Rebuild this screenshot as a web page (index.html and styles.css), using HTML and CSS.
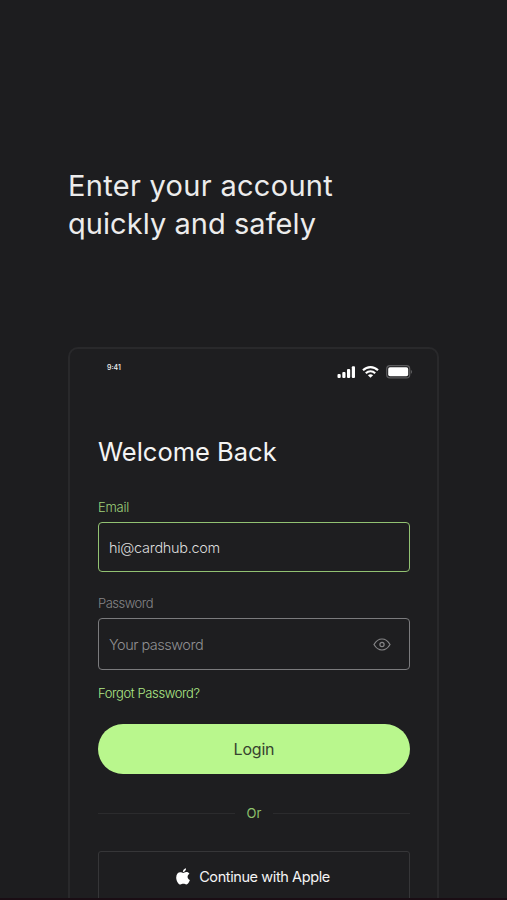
FILE: index.html
```html
<!DOCTYPE html>
<html lang="en">

<head>
    <meta charset="UTF-8">
    <meta name="viewport" content="width=device-width, initial-scale=1.0">
    <title>Cardhub Login</title>
    <link rel="stylesheet" href="styles.css">
</head>

<body>
    <h1 class="headline"><span class="line-one">Enter your account</span><br><span class="line-two">quickly and safely</span></h1>

    <main class="phone">
        <div class="status-bar">
            <span class="time">9:41</span>
            <div class="status-icons">
                <svg width="19" height="12" viewBox="0 0 19 12" fill="#fff">
                    <rect x="0.5" y="8" width="3.2" height="4" rx="1" />
                    <rect x="5.3" y="6" width="3.2" height="6" rx="1" />
                    <rect x="10" y="3" width="3.2" height="9" rx="1" />
                    <rect x="14.8" y="0.3" width="3.2" height="11.7" rx="1" />
                </svg>
                <svg class="wifi" width="17" height="12" viewBox="0 0 17 12" fill="none" stroke="#fff" stroke-width="2.1">
                    <path d="M1 4.3C5.2 0 11.8 0 16 4.3" />
                    <path d="M3.8 7.2c2.7-2.7 6.7-2.7 9.4 0" />
                    <path d="M8.5 11.8 5.9 9.2c1.5-1.4 3.7-1.4 5.2 0z" fill="#fff" stroke="none" />
                </svg>
                <svg width="27" height="14" viewBox="0 0 27 14">
                    <rect x="0.7" y="0.7" width="23" height="12.2" rx="3.2" fill="none" stroke="#5c5c5e" stroke-width="1.2" />
                    <rect x="2.2" y="2.3" width="20" height="9" rx="1.8" fill="#fff" />
                    <path d="M24.8 4.7c1.8.8 1.8 3.4 0 4.2z" fill="#5c5c5e" />
                </svg>
            </div>
        </div>

        <form class="login-form">
            <h2>Welcome Back</h2>

            <label class="active" for="email">Email</label>
            <div class="field active">
                <input type="text" id="email" value="hi@cardhub.com">
            </div>

            <label for="password">Password</label>
            <div class="field password">
                <input type="password" id="password" placeholder="Your password">
                <svg width="18" height="13" viewBox="0 0 18 13" fill="none" stroke="#858587" stroke-width="1.2">
                    <path d="M1 6.5C3 3 5.8 1 9 1s6 2 8 5.5C15 10 12.2 12 9 12S3 10 1 6.5z" />
                    <circle cx="9" cy="6.5" r="2.1" />
                </svg>
            </div>

            <a class="forgot" href="#">Forgot Password?</a>
            <button type="button" class="login">Login</button>

            <div class="divider"><span>Or</span></div>

            <button type="button" class="apple">
                <svg width="14" height="17" viewBox="0 0 14 17" fill="#fff">
                    <path d="M10 .2C10.2 2.2 8.6 4 6.9 3.9 6.7 2.1 8.3.4 10 .2z" />
                    <path d="M7.2 4.9c.8 0 1.7-.9 3.2-.8 1.3 0 2.4.7 3 1.6-2.7 1.6-2.2 5.2.5 6.3-.7 2-2 4.4-3.5 4.5-1.2 0-1.6-.7-3-.7s-1.9.7-3 .7C2.4 16.5.2 12.9.2 9.4c0-3.3 2-5.2 4-5.2 1.4 0 2.3.7 3 .7z" />
                </svg>
                <span>Continue with Apple</span>
            </button>
        </form>
    </main>
</body>

</html>
```
FILE: styles.css
```css
* {
    box-sizing: border-box;
}

body {
    margin: 0;
    height: 900px;
    overflow: hidden;
    background-color: #1d1d1f;
    border-bottom: 2px solid #1a0d14;
    color: #f4f4f4;
    font-family: Inter, "Liberation Sans", sans-serif;
}

.headline {
    margin: 0;
    height: 347px;
    padding: 167px 0 0 68px;
    font-size: 29px;
    font-weight: 400;
    line-height: 38px;
    white-space: nowrap;
    color: #ececec;
}

.line-one {
    letter-spacing: 0.3px;
}

.line-two {
    letter-spacing: 0.05px;
}

.phone {
    width: 371px;
    height: 580px;
    margin-left: 68px;
    border: 2px solid #29292b;
    border-radius: 10px;
    background-color: #1e1e20;
}

.status-bar {
    display: flex;
    justify-content: space-between;
    height: 88px;
    padding: 15px 24px 0 37px;
}

.time {
    font-size: 7px;
    font-weight: 500;
    line-height: 8px;
}

.status-icons {
    display: flex;
    align-items: center;
    height: 16px;
}

.wifi {
    margin: 0 7px 0 6px;
}

.login-form {
    display: flex;
    flex-direction: column;
    width: 312px;
    margin-left: 28px;
}

h2 {
    margin: 0;
    height: 61px;
    font-size: 25.5px;
    font-weight: 400;
    line-height: 30px;
    white-space: nowrap;
}

label {
    height: 24px;
    color: #858587;
    font-size: 13px;
    font-weight: 300;
    line-height: 18px;
    letter-spacing: -0.5px;
}

label.active {
    color: #9ed27b;
    letter-spacing: -0.25px;
}

.field {
    display: flex;
    align-items: center;
    height: 52px;
    padding: 0 18px 0 10px;
    border: 1px solid #7b7b7d;
    border-radius: 4px;
}

.field.active {
    height: 50px;
    margin-bottom: 22px;
    border-color: #92c272;
}

input {
    flex: 1;
    min-width: 0;
    padding: 0;
    border: 0;
    outline: 0;
    background: transparent;
    color: #dcdcdc;
    font-family: inherit;
    font-size: 14.5px;
    font-weight: 300;
    letter-spacing: -0.3px;
}

input::placeholder {
    color: #8f8f91;
    opacity: 1;
    letter-spacing: -0.5px;
}

.forgot {
    margin-top: 14px;
    height: 40px;
    color: #aee887;
    font-size: 13px;
    font-weight: 300;
    line-height: 18px;
    letter-spacing: -0.4px;
    text-decoration: none;
}

button {
    font-family: inherit;
    cursor: pointer;
}

.login {
    height: 50px;
    padding: 0;
    border: 0;
    border-radius: 25px;
    background-color: #b9f78d;
    color: #36432f;
    font-size: 16px;
    letter-spacing: -0.2px;
}

.divider {
    display: flex;
    align-items: center;
    gap: 12px;
    height: 20px;
    margin: 29px 0 28px;
    color: #8fc16d;
    font-size: 13px;
}

.divider::before,
.divider::after {
    content: "";
    flex: 1;
    height: 1px;
    background-color: #2b2b2d;
}

.apple {
    display: flex;
    align-items: center;
    justify-content: center;
    gap: 9px;
    height: 50px;
    padding: 0 2px 0 0;
    border: 1px solid #363638;
    border-radius: 3px;
    background: transparent;
    color: #f4f4f4;
    font-size: 14.5px;
    letter-spacing: -0.4px;
}
```
